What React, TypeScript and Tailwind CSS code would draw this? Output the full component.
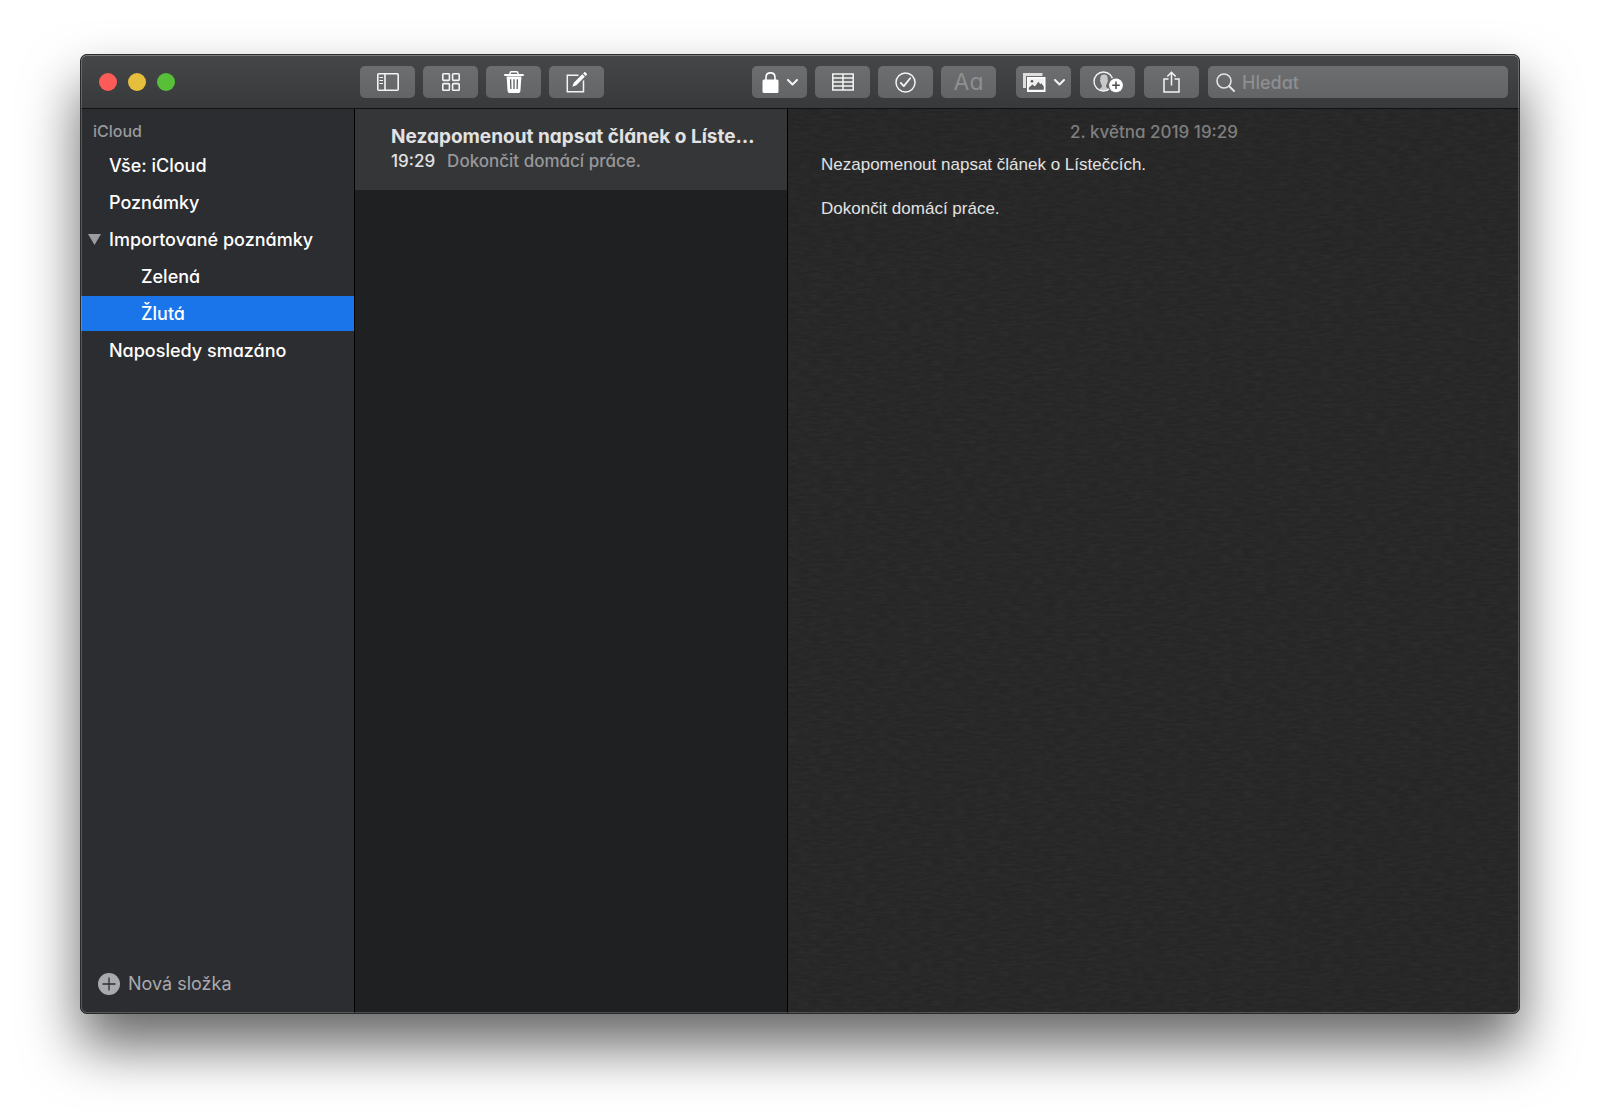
import React from 'react';

interface Folder {
  id: string;
  name: string;
  nested?: boolean;
  expandable?: boolean;
  selected?: boolean;
}

const folders: Folder[] = [
  { id: 'all', name: 'Vše: iCloud' },
  { id: 'notes', name: 'Poznámky' },
  { id: 'imported', name: 'Importované poznámky', expandable: true },
  { id: 'green', name: 'Zelená', nested: true },
  { id: 'yellow', name: 'Žlutá', nested: true, selected: true },
  { id: 'trash', name: 'Naposledy smazáno' },
];

const note = {
  date: '2. května 2019 19:29',
  time: '19:29',
  preview: 'Nezapomenout napsat článek o Líste…',
  title: 'Nezapomenout napsat článek o Lístečcích.',
  body: 'Dokončit domácí práce.',
};

const Chevron = () => (
  <svg width="11" height="7" viewBox="0 0 11 7" fill="none" stroke="#f4f4f4" strokeWidth="2" strokeLinecap="round" strokeLinejoin="round">
    <path d="M1 1l4.5 4.5L10 1" />
  </svg>
);

const SidebarIcon = () => (
  <svg width="22" height="18" viewBox="0 0 22 18" fill="none" stroke="#f4f4f4" strokeWidth="1.6">
    <rect x="0.8" y="0.8" width="20.4" height="16.4" rx="1" />
    <path d="M8 1v16" />
    <path d="M2.5 4.5h3.5M2.5 7.5h3.5M2.5 10.5h3.5" strokeWidth="1" />
  </svg>
);

const GridIcon = () => (
  <svg width="18" height="18" viewBox="0 0 18 18" fill="none" stroke="#f4f4f4" strokeWidth="1.6">
    <rect x="0.8" y="0.8" width="6.6" height="6.6" rx="0.8" />
    <rect x="10.6" y="0.8" width="6.6" height="6.6" rx="0.8" />
    <rect x="0.8" y="10.6" width="6.6" height="6.6" rx="0.8" />
    <rect x="10.6" y="10.6" width="6.6" height="6.6" rx="0.8" />
  </svg>
);

const TrashIcon = () => (
  <svg width="20" height="22" viewBox="0 0 20 22" fill="none">
    <path d="M6 3.2V2.4C6 1.4 6.6.8 7.6.8h4.8c1 0 1.6.6 1.6 1.6v.8" stroke="#fff" strokeWidth="1.5" />
    <path d="M1 3.9h18" stroke="#fff" strokeWidth="2" strokeLinecap="round" />
    <path d="M2.6 5.5h14.8l-1 14.6c-.1 1.2-.8 1.9-2 1.9H5.6c-1.2 0-1.9-.7-2-1.9z" fill="#fff" />
    <path d="M6.6 8.3l.3 9.7M10 8.3V18M13.4 8.3l-.3 9.7" stroke="#5a5b5d" strokeWidth="1.3" />
  </svg>
);

const ComposeIcon = () => (
  <svg width="21" height="22" viewBox="0 0 21 22" fill="none">
    <path d="M12.5 4.2H1.3v16.5h16.2V9.5" stroke="#f4f4f4" strokeWidth="1.5" />
    <path d="M6.3 15.7l1.5-4L16.3 3.2l2.5 2.5-8.5 8.5z" fill="#fff" />
    <path d="M17.1 2.4l1-1c.5-.5 1-.5 1.5 0l1 1c.5.5.5 1 0 1.5l-1 1z" fill="#fff" />
  </svg>
);

const LockIcon = () => (
  <svg width="17" height="21" viewBox="0 0 17 21" fill="none">
    <path d="M4 8.5V5.4C4 2.7 5.8.9 8.5.9S13 2.7 13 5.4v3.1" stroke="#fff" strokeWidth="1.6" />
    <rect x="0.5" y="7.5" width="16" height="13.5" rx="1.5" fill="#fff" />
  </svg>
);

const TableIcon = () => (
  <svg width="22" height="18" viewBox="0 0 22 18" fill="none" stroke="#f4f4f4" strokeWidth="1.5">
    <rect x="0.8" y="1" width="20.4" height="16" />
    <path d="M11 1v16M1 5h20M1 9h20M1 13h20" />
  </svg>
);

const CheckIcon = () => (
  <svg width="21" height="21" viewBox="0 0 21 21" fill="none" stroke="#f4f4f4" strokeWidth="1.5">
    <circle cx="10.5" cy="10.5" r="9.5" />
    <path d="M5.8 10.9l3 3.2 6.4-7.8" strokeWidth="1.8" strokeLinecap="round" strokeLinejoin="round" />
  </svg>
);

const MediaIcon = () => (
  <svg width="23" height="19" viewBox="0 0 23 19" fill="none">
    <path d="M0 0h19.5v3H3v12H0z" fill="#dedede" />
    <rect x="4" y="4" width="18.5" height="15" fill="#fff" />
    <rect x="5.6" y="5.6" width="15.3" height="11.8" fill="#f0f0f0" />
    <circle cx="9" cy="8.3" r="1.3" fill="#5a5b5d" />
    <path d="M5.8 16.8v-2l3.7-3.3 2.3 2 3.7-4.8 1.8 2.5 1-1 2.5 3.3v3.3z" fill="#5f6062" />
  </svg>
);

const PersonIcon = () => (
  <svg width="30" height="22" viewBox="0 0 30 22" fill="none">
    <path d="M6.5 18.5c.3-1.6 2.3-1.7 2.5-3 .1-.9-.2-1.3-.6-2-.5-.8-.8-1.7-.9-2.7-.6-.4-.7-1.7-.2-2C6.9 5.500 8.300 3.600 11 3.600s4.100 1.900 3.700 5.200c.5.3.4 1.600-.2 2-.1 1-.4 1.900-.9 2.700-.4.7-.7 1.100-.6 2 .2 1.300 2.200 1.400 2.500 3-1.300 1.100-2.800 1.600-4.500 1.600s-3.300-.5-4.500-1.600z" fill="#c9c9ca" />
    <circle cx="10.5" cy="10.5" r="9.5" stroke="#f4f4f4" strokeWidth="1.4" />
    <circle cx="23" cy="14.3" r="8" fill="#6b6c6e" />
    <circle cx="23" cy="14.3" r="6.9" fill="#fff" />
    <path d="M23 10.5v7.6M19.2 14.3h7.6" stroke="#4a4b4d" strokeWidth="1.5" />
  </svg>
);

const ShareIcon = () => (
  <svg width="17" height="22" viewBox="0 0 17 22" fill="none" stroke="#f4f4f4" strokeWidth="1.5">
    <path d="M5.5 8H1v13h15V8h-4.5" />
    <path d="M8.5 14.5V1.5M4.3 5.6l4.2-4.3 4.2 4.3" />
  </svg>
);

const SearchIcon = () => (
  <svg width="19" height="19" viewBox="0 0 19 19" fill="none" stroke="#e4e4e4" strokeWidth="1.6" strokeLinecap="round">
    <circle cx="8" cy="8" r="7" />
    <path d="M13 13l5 5" strokeWidth="1.9" />
  </svg>
);

// horizontal paper grain behind the note
const PaperTexture = () => (
  <svg aria-hidden="true" className="absolute inset-0 h-full w-full opacity-[0.04]">
    <filter id="paper">
      <feTurbulence type="fractalNoise" baseFrequency="0.09 0.4" numOctaves="2" seed="4" />
      <feColorMatrix values="0 0 0 0 0.5  0 0 0 0 0.5  0 0 0 0 0.5  2 0 0 0 -0.6" />
    </filter>
    <rect width="100%" height="100%" filter="url(#paper)" />
  </svg>
);

interface ToolbarButtonProps {
  label: string;
  disabled?: boolean;
  children: React.ReactNode;
}

const ToolbarButton: React.FC<ToolbarButtonProps> = ({ label, disabled, children }) => (
  <button
    type="button"
    aria-label={label}
    disabled={disabled}
    className="flex h-8 w-[55px] shrink-0 items-center justify-center gap-2 rounded-[5px] bg-linear-to-b from-[#6d6e70] to-[#636466] text-[#8e8f91]"
  >
    {children}
  </button>
);

const Toolbar = () => (
  <header className="flex h-[55px] shrink-0 items-center border-b border-[#111213] bg-linear-to-b from-[#464749] to-[#38393b] pt-[2px] pr-3">
    <div className="flex w-[280px] shrink-0 gap-[11px] pl-[19px]">
      <button type="button" aria-label="Zavřít" className="size-[18px] rounded-full bg-[#fc5b57]" />
      <button type="button" aria-label="Minimalizovat" className="size-[18px] rounded-full bg-[#e5bf3c]" />
      <button type="button" aria-label="Zvětšit" className="size-[18px] rounded-full bg-[#57c038]" />
    </div>
    <div className="flex gap-2">
      <ToolbarButton label="Složky"><SidebarIcon /></ToolbarButton>
      <ToolbarButton label="Galerie"><GridIcon /></ToolbarButton>
      <ToolbarButton label="Smazat"><TrashIcon /></ToolbarButton>
      <ToolbarButton label="Nová poznámka"><ComposeIcon /></ToolbarButton>
    </div>
    <div className="ml-auto flex gap-5">
      <div className="flex gap-2">
        <ToolbarButton label="Zamknout"><LockIcon /><Chevron /></ToolbarButton>
        <ToolbarButton label="Tabulka"><TableIcon /></ToolbarButton>
        <ToolbarButton label="Seznam úkolů"><CheckIcon /></ToolbarButton>
        <ToolbarButton label="Formát" disabled>
          <span className="text-[23px] leading-8">Aa</span>
        </ToolbarButton>
      </div>
      <div className="flex gap-[9px]">
        <ToolbarButton label="Média"><MediaIcon /><Chevron /></ToolbarButton>
        <ToolbarButton label="Přidat lidi"><PersonIcon /></ToolbarButton>
        <ToolbarButton label="Sdílet"><ShareIcon /></ToolbarButton>
        <label className="flex h-8 w-[300px] items-center gap-[7px] rounded-[5px] bg-linear-to-b from-[#6d6e70] to-[#636466] px-2">
          <SearchIcon />
          <input
            type="search"
            aria-label="Hledat"
            placeholder="Hledat"
            className="min-w-0 flex-1 bg-transparent text-[18px] font-medium text-white outline-none placeholder:text-[#8e8f91]"
          />
        </label>
      </div>
    </div>
  </header>
);

const Sidebar = () => (
  <nav className="flex w-[275px] shrink-0 flex-col border-r border-black bg-[#2c2d31] [font-feature-settings:normal]">
    <h2 className="mt-3 mb-[7px] pl-[13px] text-base leading-5 font-medium text-[#98999d]">iCloud</h2>
    <ul className="flex flex-col gap-[2px] [font-feature-settings:'cv11']">
      {folders.map((folder) => (
        <li key={folder.id}>
          <button
            type="button"
            className={`flex h-[35px] w-full items-center text-left text-[18px] font-medium text-white ${folder.selected ? 'bg-[#1a75ea]' : ''} ${folder.nested ? 'pl-[61px]' : folder.expandable ? 'pl-2' : 'pl-[29px]'}`}
          >
            {folder.expandable && (
              <svg width="13" height="11" viewBox="0 0 13 11" className="mr-2 shrink-0" fill="#9b9ca0">
                <path d="M0 0h13L6.5 11z" />
              </svg>
            )}
            {folder.name}
          </button>
        </li>
      ))}
    </ul>
    <button type="button" className="mt-auto mb-4 flex items-center gap-2 pl-[18px] text-[18px] leading-7 text-[#a9aaae]">
      <svg width="22" height="22" viewBox="0 0 22 22" fill="none">
        <circle cx="11" cy="11" r="11" fill="#a9aaae" />
        <path d="M11 4.5v13M4.5 11h13" stroke="#2c2d31" strokeWidth="1.3" />
      </svg>
      Nová složka
    </button>
  </nav>
);

const NoteList = () => (
  <section className="w-[433px] shrink-0 border-r border-black bg-[#1f2022]">
    <button type="button" className="block h-[81px] w-full bg-[#353638] pr-6 pb-[2px] pl-9 text-left">
      <span className="block text-[19px] leading-[25px] font-bold whitespace-nowrap text-[#e2e2e3]">{note.preview}</span>
      <span className="flex gap-3 text-[17px] leading-[25px] font-medium">
        <span className="text-[#e2e2e3]">{note.time}</span>
        <span className="text-[#97989a]">{note.body}</span>
      </span>
    </button>
  </section>
);

const NoteView = () => (
  <main className="relative min-w-0 flex-1 bg-[#262626]">
    <PaperTexture />
    <article className="relative px-[33px] pt-3">
      <time className="block text-center text-[17px] leading-[22px] font-medium text-[#7f7f7f]">{note.date}</time>
      <div className="mt-[11px] font-['Liberation_Sans',Arial,sans-serif] text-[17px] leading-[22px] text-[#e2e2e2]">
        <p>{note.title}</p>
        <p className="mt-[22px]">{note.body}</p>
      </div>
    </article>
  </main>
);

export default function App() {
  return (
    <div className="flex min-h-screen bg-white px-20 pt-[54px] pb-[105px] font-[Inter,'Noto_Sans',sans-serif] [font-feature-settings:'cv11']">
      <div className="relative flex min-w-0 flex-1 flex-col overflow-hidden rounded-[7px] shadow-[0_32px_56px_rgba(0,0,0,0.6)]">
        <Toolbar />
        <div className="flex flex-1">
          <Sidebar />
          <NoteList />
          <NoteView />
        </div>
        <div className="pointer-events-none absolute inset-0 rounded-[7px] border border-[#2a2a2b]" />
        <div className="pointer-events-none absolute inset-px rounded-[6px] border border-white/20 border-t-white/30" />
      </div>
    </div>
  );
}
